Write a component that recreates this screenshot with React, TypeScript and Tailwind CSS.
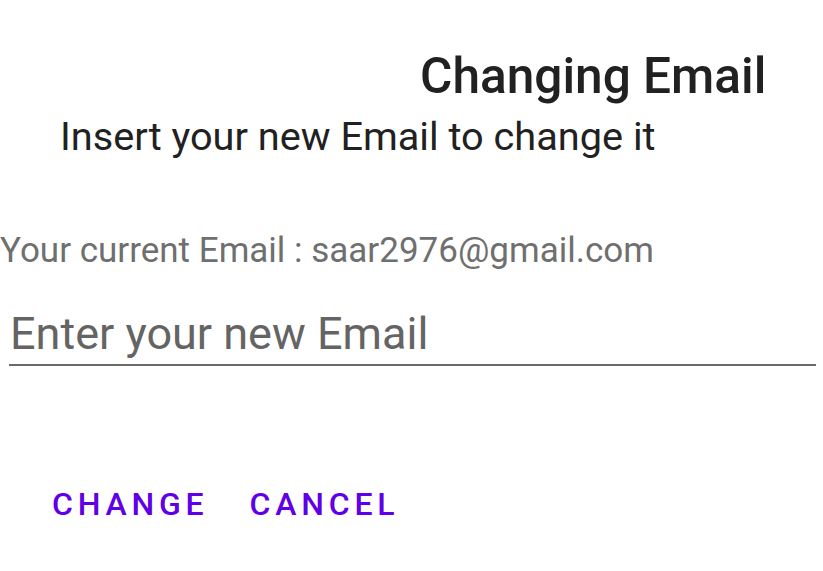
export default function App() {
  return (
    <div className="w-[823px] h-[571px] bg-white overflow-hidden flex flex-col" style={{ fontFamily: "Roboto, sans-serif" }}>
      <div className="pt-[52px] pl-[420px]">
        <h1 className="text-[49.6px] leading-none font-medium text-[#212121] whitespace-nowrap">Changing Email</h1>
      </div>
      <div className="pt-[15px] pl-[60px]">
        <p className="text-[39.7px] leading-none text-[#212121] whitespace-nowrap">Insert your new Email to change it</p>
      </div>
      <div className="pt-[77px] pl-0">
        <p className="text-[35px] leading-none text-[#6f6f6f] whitespace-nowrap">Your current Email : saar2976@gmail.com</p>
      </div>
      <div className="pt-[34px] pl-[9px] w-[816px]">
        <input
          className="block w-full text-[45px] leading-none h-[64px] pl-[1px] outline-none border-b-2 border-[#6a6a6a] bg-transparent placeholder:text-[#646464] text-[#212121]"
          placeholder="Enter your new Email"
        />
      </div>
      <div className="pt-[122px] pl-[52px] flex gap-[41px]">
        <button className="text-[32px] leading-none font-medium tracking-[0.15em] text-[#5f00e6]">CHANGE</button>
        <button className="text-[32px] leading-none font-medium tracking-[0.15em] text-[#5f00e6]">CANCEL</button>
      </div>
    </div>
  );
}
